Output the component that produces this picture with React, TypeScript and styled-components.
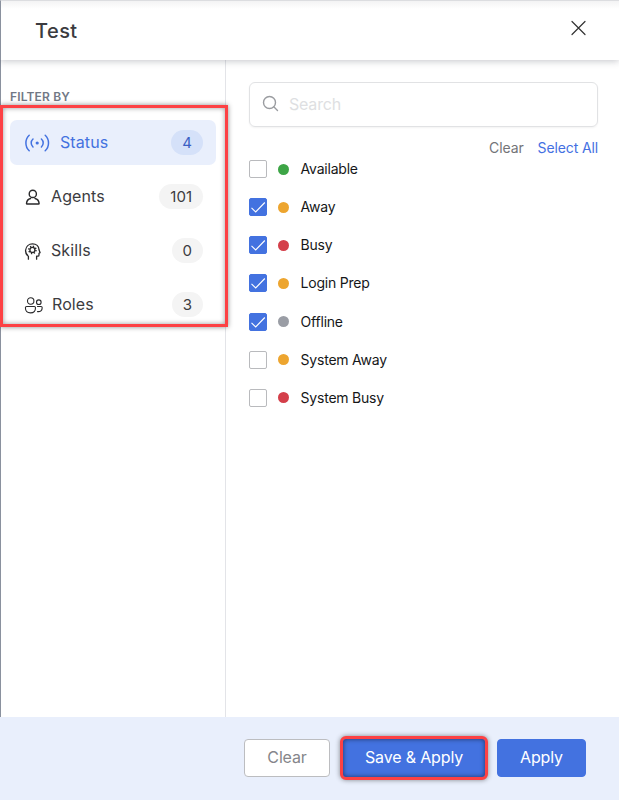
import React, { useState } from "react";
import styled, { createGlobalStyle } from "styled-components";

const GlobalStyle = createGlobalStyle`
  * { box-sizing: border-box; }
  body { margin: 0; background: #fff; font-family: Inter, "Liberation Sans", sans-serif; }
  button { font-family: inherit; cursor: pointer; }
`;

const Panel = styled.div`
  width: 619px;
  height: 800px;
  display: flex;
  flex-direction: column;
  background: #fff;
  overflow: hidden;
`;

const Header = styled.header`
  position: relative;
  z-index: 1;
  flex: none;
  height: 60px;
  display: flex;
  align-items: center;
  justify-content: space-between;
  padding: 1px 32px 0 34px;
  border-top: 1px solid #dcdde0;
  border-left: 1px solid #8a919e;
  background: linear-gradient(#f3f3f4, #fff 8px);
  box-shadow: 0 1px 7px rgba(40, 44, 60, 0.28);
`;

const Title = styled.h1`
  margin: 0;
  font-size: 20px;
  line-height: 28px;
  font-weight: 500;
  letter-spacing: 0.45px;
  color: #3b3b3f;
`;

const CloseButton = styled.button`
  display: flex;
  padding: 0;
  border: 0;
  margin: 0 0 6px;
  background: none;
  color: #333;
`;

const Body = styled.div`
  flex: 1;
  display: flex;
  min-height: 0;
  border-left: 1px solid #8a919e;
`;

const Sidebar = styled.aside`
  flex: none;
  width: 225px;
  border-right: 1px solid #e3e4e8;
  padding-top: 29px;
`;

const SidebarTitle = styled.h2`
  margin: 0 0 1px 9px;
  font-size: 12px;
  line-height: 15px;
  font-weight: 600;
  letter-spacing: 0.15px;
  color: #717885;
`;

const Menu = styled.nav`
  position: relative;
  width: 228px;
  height: 222px;
  margin-left: -1px;
  padding: 12px 9px 0 7px;
  display: flex;
  flex-direction: column;
  gap: 9px;
  border: 3px solid #fd4144;
  box-shadow: 0 0 5px rgba(0, 0, 0, 0.45), inset 0 0 5px rgba(0, 0, 0, 0.4);
`;

const MenuItem = styled.button<{ $active: boolean }>`
  flex: none;
  height: 45px;
  display: flex;
  align-items: center;
  border: 0;
  border-radius: 7px;
  padding: 0 13px 0 14px;
  font-size: 16px;
  line-height: 20px;
  color: ${(p) => (p.$active ? "#4372e0" : "#3c3c3f")};
  background: ${(p) => (p.$active ? "#e9effc" : "transparent")};
`;

const MenuIcon = styled.span<{ $width: number }>`
  flex: none;
  display: flex;
  width: ${(p) => p.$width}px;
`;

const MenuLabel = styled.span`
  padding-bottom: 2px;
  letter-spacing: 0.1px;
`;

const Badge = styled.span<{ $active: boolean }>`
  margin-left: auto;
  min-width: ${(p) => (p.$active ? 32 : 31)}px;
  height: 25px;
  padding: 1px 11px 0;
  border-radius: 13px;
  text-align: center;
  font-size: 15px;
  line-height: 24px;
  color: ${(p) => (p.$active ? "#3b60c4" : "#3c3c3f")};
  background: ${(p) => (p.$active ? "#d5e1f9" : "#f4f4f4")};
`;

const Content = styled.main`
  flex: 1;
  padding: 22px 21px 0 23px;
`;

const SearchBox = styled.label`
  display: flex;
  align-items: center;
  gap: 10px;
  height: 45px;
  padding: 0 12px 2px;
  border: 1px solid #e1e2e4;
  border-radius: 6px;
  box-shadow: 0 1px 2px rgba(0, 0, 0, 0.05);
  color: #9a9ca0;
`;

const SearchInput = styled.input`
  flex: 1;
  min-width: 0;
  border: 0;
  outline: 0;
  padding: 0;
  background: none;
  font: 16px/20px Inter, "Liberation Sans", sans-serif;
  letter-spacing: -0.2px;
  color: #333;
  &::placeholder { color: #dedfe2; opacity: 1; }
`;

const Links = styled.div`
  display: flex;
  justify-content: flex-end;
  gap: 14px;
  height: 18px;
  margin-top: 12px;
`;

const LinkButton = styled.button<{ $primary?: boolean }>`
  border: 0;
  padding: 0;
  background: none;
  font-size: 14px;
  line-height: 18px;
  letter-spacing: -0.12px;
  color: ${(p) => (p.$primary ? "#4470e2" : "#737478")};
`;

const StatusList = styled.div`
  display: flex;
  flex-direction: column;
  gap: 20.15px;
  margin-top: 3px;
`;

const StatusRow = styled.label`
  height: 18px;
  display: flex;
  align-items: center;
  font-size: 14px;
  line-height: 18px;
  letter-spacing: -0.22px;
  color: #161719;
`;

const HiddenInput = styled.input`
  appearance: none;
  width: 0;
  height: 0;
  margin: 0;
`;

const Box = styled.span<{ $checked: boolean }>`
  width: 18px;
  height: 18px;
  border: 1px solid ${(p) => (p.$checked ? "#4372e0" : "#b9babd")};
  border-radius: 2px;
  background: ${(p) => (p.$checked ? "#4372e0" : "#fff")};
  svg { display: block; }
`;

const Dot = styled.span<{ $color: string }>`
  width: 11px;
  height: 11px;
  margin: 0 11.6px 0 11px;
  border-radius: 50%;
  background: ${(p) => p.$color};
`;

const Footer = styled.footer`
  flex: none;
  height: 83px;
  display: flex;
  align-items: center;
  justify-content: flex-end;
  padding: 0 33px 1px 0;
  background: #e9effc;
`;

const Button = styled.button<{ $outline?: boolean; $width: number }>`
  width: ${(p) => p.$width}px;
  height: 38px;
  padding: 0 0 2px;
  border: 1px solid ${(p) => (p.$outline ? "#bcbdc0" : "#4372e0")};
  border-radius: 4px;
  background: ${(p) => (p.$outline ? "#fff" : "#4372e0")};
  color: ${(p) => (p.$outline ? "#85868a" : "#fff")};
  font-size: 16px;
  line-height: 20px;
  letter-spacing: -0.15px;
`;

const Highlighted = styled(Button)`
  height: 44px;
  margin: 0 9px 0 10px;
  border: 3px solid #fd4144;
  border-radius: 6px;
  box-shadow: 0 0 5px rgba(0, 0, 0, 0.45), inset 0 0 5px rgba(0, 0, 0, 0.55);
`;

const stroke = {
  fill: "none",
  stroke: "currentColor",
  strokeLinecap: "round" as const,
  strokeLinejoin: "round" as const,
};

const StatusIcon = () => (
  <svg width="26" height="20" viewBox="0 0 26 20" {...stroke} strokeWidth="1.5">
    <path d="M5.200 2.200C.8 6.200.8 13.800 5.200 17.800M9 6C6.600 8.200 6.600 11.800 9 14M17.400 6C19.800 8.200 19.800 11.800 17.400 14M21.200 2.200C25.600 6.200 25.600 13.800 21.200 17.800" />
    <circle cx="13.200" cy="10" r="1.600" fill="currentColor" stroke="none" />
  </svg>
);

const AgentIcon = () => (
  <svg width="18" height="18" viewBox="0 0 18 18" {...stroke} strokeWidth="1.400" color="#29292b">
    <circle cx="8.800" cy="5.900" r="3.600" />
    <path d="M6.600 10.500C4.200 11 2.700 12.900 2.500 15.400Q2.500 16 3.100 16H14.500Q15.100 16 15.100 15.400C14.900 12.900 13.400 11 11 10.500" />
  </svg>
);

const SkillIcon = () => (
  <svg width="18" height="18" viewBox="0 0 18 18" {...stroke} strokeWidth="1.300" color="#29292b">
    <path d="M4.400 17.200V14.300C2.300 12.700 1.400 10.600 1.600 8.200C1.900 4.400 4.900 1.900 8.500 1.900C12.300 1.900 14.900 4.400 15 7.800L16.100 10.700L15 11.300V13Q15 14.200 13.900 14.200H12.600V17.200" />
    <circle cx="8.400" cy="7.900" r="2.500" />
    <circle cx="8.400" cy="7.900" r="3.600" strokeDasharray="1.300 1.527" strokeWidth="1.500" strokeLinecap="butt" />
  </svg>
);

const RolesIcon = () => (
  <svg width="20" height="18" viewBox="0 0 20 18" {...stroke} strokeWidth="1.100" color="#29292b">
    <circle cx="6.700" cy="5" r="3.200" />
    <path d="M2.700 10.500H10.300Q11.500 10.500 11.500 11.700C11.500 15.200 9.700 16.900 6.500 16.900S1.400 15.200 1.400 11.700Q1.400 10.500 2.700 10.500Z" />
    <circle cx="14.800" cy="6.200" r="2.300" />
    <path d="M13.500 10.500H17Q18.200 10.500 18.200 11.700C18.200 14.500 16.500 15.900 13.500 15.600" />
  </svg>
);

const CheckMark = () => (
  <svg width="16" height="16" viewBox="0 0 16 16" fill="none" stroke="#fff" strokeWidth="1.100">
    <path d="M1.500 8.800L5.700 13L14.800 3.500" />
  </svg>
);

const menu = [
  { label: "Status", count: 4, icon: <StatusIcon />, width: 36 },
  { label: "Agents", count: 101, icon: <AgentIcon />, width: 27 },
  { label: "Skills", count: 0, icon: <SkillIcon />, width: 27 },
  { label: "Roles", count: 3, icon: <RolesIcon />, width: 28 },
];

const statuses = [
  { label: "Available", color: "#3da546" },
  { label: "Away", color: "#eda52f" },
  { label: "Busy", color: "#d43f4a" },
  { label: "Login Prep", color: "#eda52f" },
  { label: "Offline", color: "#9a9da5" },
  { label: "System Away", color: "#eda52f" },
  { label: "System Busy", color: "#d43f4a" },
];

export default function App() {
  const [active, setActive] = useState("Status");
  const [checked, setChecked] = useState<string[]>(["Away", "Busy", "Login Prep", "Offline"]);
  const toggle = (label: string) =>
    setChecked((c) => (c.includes(label) ? c.filter((x) => x !== label) : [...c, label]));

  return (
    <Panel>
      <GlobalStyle />
      <Header>
        <Title>Test</Title>
        <CloseButton aria-label="Close">
          <svg width="16" height="16" viewBox="0 0 16 16" {...stroke} strokeWidth="1.200">
            <path d="M1 1.500L14 14.500M14 1.500L1 14.500" />
          </svg>
        </CloseButton>
      </Header>
      <Body>
        <Sidebar>
          <SidebarTitle>FILTER BY</SidebarTitle>
          <Menu>
            {menu.map((m) => (
              <MenuItem key={m.label} $active={m.label === active} onClick={() => setActive(m.label)}>
                <MenuIcon $width={m.width}>{m.icon}</MenuIcon>
                <MenuLabel>{m.label}</MenuLabel>
                <Badge $active={m.label === active}>{m.count}</Badge>
              </MenuItem>
            ))}
          </Menu>
        </Sidebar>
        <Content>
          <SearchBox>
            <svg width="17" height="17" viewBox="0 0 17 17" {...stroke} strokeWidth="1.400">
              <circle cx="7.500" cy="7.500" r="6" />
              <path d="M12 12L15.500 15.500" />
            </svg>
            <SearchInput placeholder="Search" />
          </SearchBox>
          <Links>
            <LinkButton onClick={() => setChecked([])}>Clear</LinkButton>
            <LinkButton $primary onClick={() => setChecked(statuses.map((s) => s.label))}>
              Select All
            </LinkButton>
          </Links>
          <StatusList>
            {statuses.map((s) => (
              <StatusRow key={s.label}>
                <HiddenInput
                  type="checkbox"
                  checked={checked.includes(s.label)}
                  onChange={() => toggle(s.label)}
                />
                <Box $checked={checked.includes(s.label)}>
                  {checked.includes(s.label) && <CheckMark />}
                </Box>
                <Dot $color={s.color} />
                {s.label}
              </StatusRow>
            ))}
          </StatusList>
        </Content>
      </Body>
      <Footer>
        <Button $outline $width={86}>Clear</Button>
        <Highlighted $width={148}>Save &amp; Apply</Highlighted>
        <Button $width={89}>Apply</Button>
      </Footer>
    </Panel>
  );
}
